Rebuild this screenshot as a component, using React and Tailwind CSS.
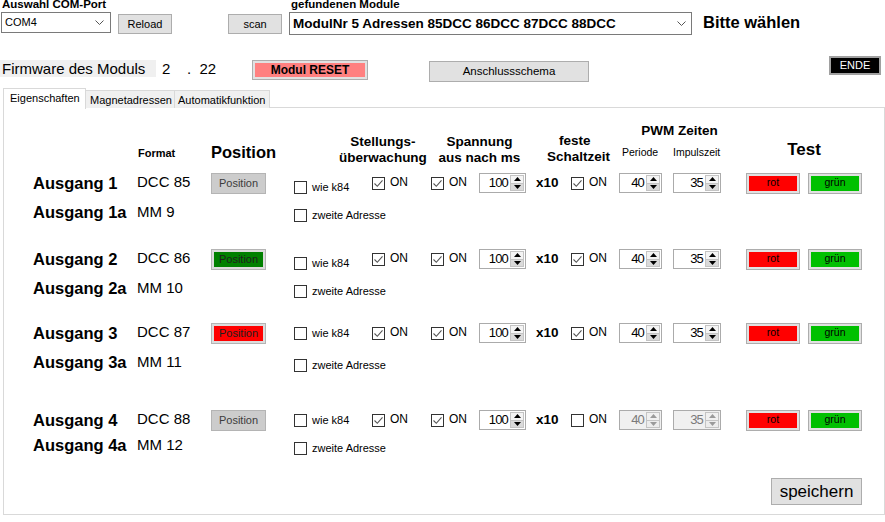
import React from "react";

function Check({ checked }) {
  return (
    <div className="w-[13px] h-[13px] border border-[#333333] bg-white flex items-center justify-center shrink-0">
      {checked && (
        <svg width="11" height="11" viewBox="0 0 11 11">
          <path d="M1.5 5.5 L4.3 8.3 L9.5 2.3" fill="none" stroke="#555555" strokeWidth="1.1" />
        </svg>
      )}
    </div>
  );
}

function Num({ value, w, disabled }) {
  const tri = disabled ? "#9a9a9a" : "#000000";
  return (
    <div className={`flex h-[20px] border border-[#ababab] ${disabled ? "bg-[#f0f0f0]" : "bg-white"} ${w}`}>
      <div className={`flex-1 text-right text-[13px] leading-[18px] tracking-[-0.8px] pr-[2px] ${disabled ? "text-[#7a7a7a]" : "text-black"}`}>
        {value}
      </div>
      <div className="w-[14px] flex flex-col my-[1px] mr-[1px]">
        <div className={`flex-1 border border-[#c4c4c4] flex items-center justify-center ${disabled ? "bg-[#f0f0f0]" : "bg-[#f4f4f4]"}`}>
          <svg width="7" height="4" viewBox="0 0 7 4"><path d="M0 4 L3.5 0 L7 4Z" fill={tri} /></svg>
        </div>
        <div className={`flex-1 border border-t-0 border-[#c4c4c4] flex items-center justify-center ${disabled ? "bg-[#ececec]" : "bg-[#dadada]"}`}>
          <svg width="7" height="4" viewBox="0 0 7 4"><path d="M0 0 L3.5 4 L7 0Z" fill={tri} /></svg>
        </div>
      </div>
    </div>
  );
}

function PosBtn({ kind }) {
  if (kind === "gray") {
    return (
      <div className="w-[55px] h-[21px] border border-[#b4b4b4] bg-[#cccccc] text-[11px] text-[#3c3c3c] flex items-center justify-center">
        Position
      </div>
    );
  }
  return (
    <div className="w-[55px] h-[21px] border border-[#b4b4b4] bg-[#dcdcdc] p-[2px]">
      <div className={`h-full flex items-center justify-center text-[11px] text-[#1e1e1e] ${kind === "green" ? "bg-[#008000]" : "bg-[#ff0000]"}`}>
        Position
      </div>
    </div>
  );
}

function ColorBtn({ bg, label }) {
  return (
    <div className="w-[54px] h-[21px] border border-[#adadad] bg-[#e1e1e1] p-[2px]">
      <div className={`h-full flex items-center justify-center text-[10.5px] text-black ${bg}`}>{label}</div>
    </div>
  );
}

function OnBox({ checked }) {
  return (
    <div className="flex items-center gap-[5px]">
      <Check checked={checked} />
      <span className="text-[12px] leading-[14px] -mt-[2px]">ON</span>
    </div>
  );
}

const groups = [
  { n: "1", dcc: "DCC 85", mm: "MM 9", pos: "gray", feste: true, dis: false, mt: "mt-0", sub: "mt-[10px]", wie: "mt-[8px]" },
  { n: "2", dcc: "DCC 86", mm: "MM 10", pos: "green", feste: true, dis: false, mt: "mt-[24px]", sub: "mt-[10px]", wie: "mt-[8px]" },
  { n: "3", dcc: "DCC 87", mm: "MM 11", pos: "red", feste: true, dis: false, mt: "mt-[22px]", sub: "mt-[10px]", wie: "mt-0" },
  { n: "4", dcc: "DCC 88", mm: "MM 12", pos: "gray", feste: false, dis: true, mt: "mt-[35px]", sub: "mt-[6px]", wie: "mt-0" },
];

function Group({ g }) {
  return (
    <div className={g.mt}>
      <div className="flex items-center h-[22px]">
        <div className="w-[133px] pl-[29px] text-[16.5px] font-bold leading-[20px] whitespace-nowrap">Ausgang {g.n}</div>
        <div className="w-[74px] text-[15px] leading-[18px] -mt-[3px]">{g.dcc}</div>
        <div className="w-[83px]"><PosBtn kind={g.pos} /></div>
        <div className={`w-[78px] flex items-center gap-[5px] ${g.wie}`}>
          <Check />
          <span className="text-[11px] leading-[13px]">wie k84</span>
        </div>
        <div className="w-[59px]"><OnBox checked /></div>
        <div className="w-[48px]"><OnBox checked /></div>
        <div className="w-[57px]"><Num value="100" w="w-[47px]" /></div>
        <div className="w-[35px] text-[13.5px] font-bold leading-[16px]">x10</div>
        <div className="w-[48px]"><OnBox checked={g.feste} /></div>
        <div className="w-[54px]"><Num value="40" w="w-[43px]" disabled={g.dis} /></div>
        <div className="w-[73px]"><Num value="35" w="w-[48px]" disabled={g.dis} /></div>
        <div className="w-[62px]"><ColorBtn bg="bg-[#ff0000]" label="rot" /></div>
        <div className="w-[54px]"><ColorBtn bg="bg-[#00c000]" label="grün" /></div>
      </div>
      <div className={`flex items-center h-[20px] ${g.sub}`}>
        <div className="w-[133px] pl-[29px] text-[16.5px] font-bold leading-[20px] whitespace-nowrap -mt-[4px]">Ausgang {g.n}a</div>
        <div className="w-[157px] text-[15px] leading-[18px] -mt-[5px]">{g.mm}</div>
        <div className="flex items-center gap-[5px] mt-[2px]">
          <Check />
          <span className="text-[11px] leading-[13px]">zweite Adresse</span>
        </div>
      </div>
    </div>
  );
}

function Chevron() {
  return (
    <svg width="9" height="5" viewBox="0 0 9 5">
      <path d="M0.5 0.5 L4.5 4.5 L8.5 0.5" fill="none" stroke="#555555" strokeWidth="1" />
    </svg>
  );
}

export default function App() {
  return (
    <div className="w-[885px] h-[522px] bg-white overflow-hidden text-black font-['Liberation_Sans',Arial,sans-serif]">
      {/* Top row */}
      <div className="flex items-start h-[56px]">
        <div className="ml-[1px] w-[110px]">
          <div className="h-[13px] text-[11.5px] font-bold leading-[10px] -mt-[1px] pl-[1px] whitespace-nowrap">Auswahl COM-Port</div>
          <div className="h-[21px] border border-[#7a7a7a] bg-white flex items-center justify-between pl-[3px] pr-[6px]">
            <span className="text-[11px] leading-[13px]">COM4</span>
            <Chevron />
          </div>
        </div>
        <div className="ml-[7px] mt-[14px] w-[54px] h-[20px] border border-[#adadad] bg-[#e1e1e1] flex items-center justify-center text-[11px]">Reload</div>
        <div className="ml-[56px] mt-[14px] w-[54px] h-[20px] border border-[#adadad] bg-[#e1e1e1] flex items-center justify-center text-[11px]">scan</div>
        <div className="ml-[7px] w-[403px]">
          <div className="h-[13px] text-[11.5px] font-bold leading-[10px] -mt-[1px] pl-[2px] whitespace-nowrap">gefundenen Module</div>
          <div className="h-[23px] border border-[#7a7a7a] bg-white flex items-center justify-between pl-[3px] pr-[5px]">
            <span className="text-[13.5px] font-bold leading-[16px] whitespace-nowrap">ModulNr 5 Adressen 85DCC 86DCC 87DCC 88DCC</span>
            <Chevron />
          </div>
        </div>
        <div className="ml-[11px] mt-[12px] h-[21px] flex items-center text-[16.5px] font-bold whitespace-nowrap">Bitte wählen</div>
      </div>

      {/* Firmware row */}
      <div className="flex items-start h-[32px]">
        <div className="mt-[4px] w-[156px] h-[17px] bg-[#f0f0f0] text-[15px] leading-[17px] pl-[2px] whitespace-nowrap">Firmware des Moduls</div>
        <div className="mt-[4px] ml-[6px] w-[25px] text-[15px] leading-[17px]">2</div>
        <div className="mt-[4px] w-[65px] text-[15px] leading-[17px] whitespace-pre">.  22</div>
        <div className="mt-[4px] w-[116px] h-[20px] border border-[#adadad] bg-[#e1e1e1] p-[2px]">
          <div className="h-full bg-[#ff8080] flex items-center justify-center text-[12px] font-bold">Modul RESET</div>
        </div>
        <div className="mt-[5px] ml-[61px] w-[160px] h-[21px] border border-[#adadad] bg-[#e1e1e1] flex items-center justify-center text-[11.5px]">Anschlussschema</div>
        <div className="ml-auto mr-[4px] w-[52px] h-[19px] border-2 border-[#a0a0a0] bg-black text-white flex items-center justify-center text-[11px] font-medium">ENDE</div>
      </div>

      {/* Tabs */}
      <div className="flex items-end h-[20px] pl-[3px] relative z-10">
        <div className="w-[83px] bg-white border border-b-0 border-[#d9d9d9] text-[11px] leading-[18px] pl-[6px] -mb-[1px] h-[21px]">Eigenschaften</div>
        <div className="w-[89px] h-[18px] bg-[#f0f0f0] border border-l-0 border-b-0 border-[#d9d9d9] text-[11px] leading-[18px] pl-[4px]">Magnetadressen</div>
        <div className="w-[95px] h-[18px] bg-[#f0f0f0] border border-l-0 border-b-0 border-[#d9d9d9] text-[11px] leading-[18px] pl-[3px]">Automatikfunktion</div>
      </div>

      {/* Panel */}
      <div className="ml-[3px] w-[882px] h-[408px] border border-[#d9d9d9] bg-white -mt-[1px]">
        <div className="flex items-start h-[64px]">
          <div className="w-[133px]" />
          <div className="w-[74px] pt-[39px] pl-[1px] text-[11px] font-bold leading-[13px]">Format</div>
          <div className="w-[122px] pt-[34px] text-[16.5px] font-bold leading-[20px]">Position</div>
          <div className="w-[100px] pt-[26px] text-center text-[13.5px] font-bold leading-[16px] whitespace-nowrap">Stellungs-<br />überwachung</div>
          <div className="w-[93px] pt-[26px] text-center text-[13.5px] font-bold leading-[16px] whitespace-nowrap">Spannung<br />aus nach ms</div>
          <div className="w-[21px]" />
          <div className="w-[72px] pt-[25px] text-[13.5px] font-bold leading-[16px] whitespace-nowrap">
            <div className="pl-[12px]">feste</div>
            <div>Schaltzeit</div>
          </div>
          <div className="w-[121px] pt-[16px]">
            <div className="text-center text-[13.5px] font-bold leading-[14px] whitespace-nowrap">PWM Zeiten</div>
            <div className="flex mt-[8px] text-[10.5px] leading-[13px]">
              <span className="pl-[3px] w-[54px]">Periode</span>
              <span>Impulszeit</span>
            </div>
          </div>
          <div className="w-[6px]" />
          <div className="w-[116px] pt-[32px] text-center text-[17px] font-bold leading-[20px]">Test</div>
        </div>

        {groups.map((g) => (
          <Group key={g.n} g={g} />
        ))}

        <div className="flex justify-end mt-[21px] mr-[22px]">
          <div className="w-[91px] h-[27px] border border-[#adadad] bg-[#e1e1e1] flex items-center justify-center text-[17px]">speichern</div>
        </div>
      </div>
    </div>
  );
}
